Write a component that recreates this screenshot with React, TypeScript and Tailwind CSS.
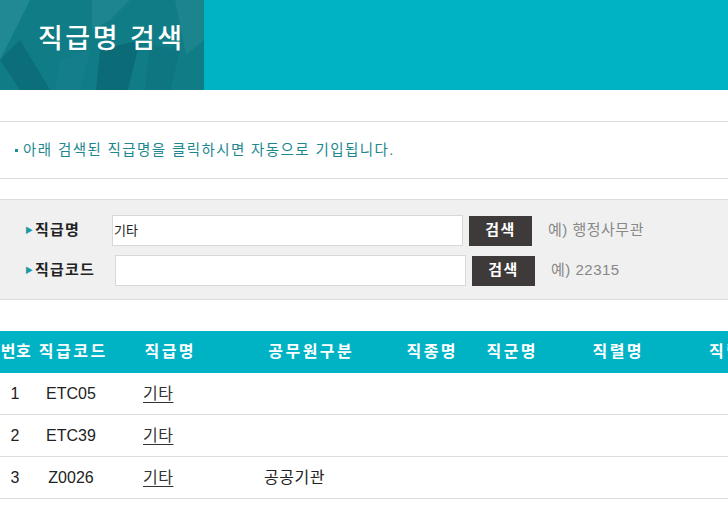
import React from "react";

const KR = '"Liberation Sans", "Noto Sans CJK KR", sans-serif';

function HeaderPattern() {
  return (
    <svg className="absolute inset-0" width="204" height="90" viewBox="0 0 204 90">
      <polygon points="0,0 30,0 10,40 0,60" fill="#2a8f98" opacity="0.7" />
      <polygon points="0,60 20,40 50,90 20,90" fill="#0b6a74" opacity="0.8" />
      <polygon points="92,0 130,0 110,20 92,30" fill="#2b8d96" opacity="0.5" />
      <polygon points="100,50 140,40 128,90 96,90" fill="#0a5f6b" opacity="0.55" />
      <polygon points="175,0 204,0 204,40 186,55" fill="#2a8e97" opacity="0.45" />
      <polygon points="60,60 90,50 80,90 55,90" fill="#1b8590" opacity="0.4" />
      <polygon points="150,45 180,50 170,90 145,90" fill="#0d6e79" opacity="0.4" />
    </svg>
  );
}

const cols = [
  { h: "번호", w: 36 },
  { h: "직급코드", w: 76 },
  { h: "직급명", w: 118 },
  { h: "공무원구분", w: 164 },
  { h: "직종명", w: 78 },
  { h: "직군명", w: 82 },
  { h: "직렬명", w: 130 },
  { h: "직렬", w: 100 },
];

const rows = [
  ["1", "ETC05", "기타", ""],
  ["2", "ETC39", "기타", ""],
  ["3", "Z0026", "기타", "공공기관"],
];

export default function App() {
  return (
    <div className="w-[728px] h-[515px] overflow-hidden bg-white" style={{ fontFamily: KR }}>
      {/* header */}
      <div className="flex h-[90px] bg-[#00b3c4]">
        <div className="relative w-[204px] h-full bg-[#0f7c86] overflow-hidden flex items-center">
          <HeaderPattern />
          <h1 className="relative pl-[38px] text-[27px] leading-none text-white font-medium tracking-[2.5px] pb-[12px] whitespace-nowrap">
            직급명 검색
          </h1>
        </div>
      </div>

      <div className="h-[31px]" />
      {/* notice */}
      <div className="border-t border-b border-[#dddddd] h-[58px] flex items-center pl-[15px]">
        <span className="w-[3px] h-[3px] bg-[#1a8f98] mr-[5px] mt-[1px]" />
        <p className="text-[14.5px] text-[#1d8790] tracking-[1.4px] leading-none">
          아래 검색된 직급명을 클릭하시면 자동으로 기입됩니다.
        </p>
      </div>
      <div className="h-[20px]" />

      {/* search box */}
      <div className="bg-[#f0f0f0] border-t border-b border-[#dcdcdc] h-[101px] pt-[15px] flex flex-col gap-[9px]">
        <div className="flex items-center h-[31px] pl-[25px]">
          <span className="text-[#1a9aa5] text-[8px] mr-[2px]">▶</span>
          <span className="w-[77px] text-[15px] font-bold text-[#222] tracking-[1.2px]">직급명</span>
          <div className="w-[351px] h-[31px] bg-white border border-[#d8d8d8] flex items-center pl-[1px] text-[13px] text-[#222]">
            기타
          </div>
          <button className="ml-[6px] w-[63px] h-[30px] bg-[#3e3a39] text-white text-[15px] font-bold tracking-[1.5px]">
            검색
          </button>
          <span className="ml-[16px] text-[15px] text-[#888] tracking-[0.5px]">예) 행정사무관</span>
        </div>
        <div className="flex items-center h-[31px] pl-[25px]">
          <span className="text-[#1a9aa5] text-[8px] mr-[2px]">▶</span>
          <span className="w-[80px] text-[15px] font-bold text-[#222] tracking-[1.2px]">직급코드</span>
          <div className="w-[351px] h-[31px] bg-white border border-[#d8d8d8]" />
          <button className="ml-[6px] w-[63px] h-[30px] bg-[#3e3a39] text-white text-[15px] font-bold tracking-[1.5px]">
            검색
          </button>
          <span className="ml-[16px] text-[15px] text-[#888] tracking-[0.5px]">예) 22315</span>
        </div>
      </div>

      <div className="h-[31px]" />
      {/* table */}
      <div className="overflow-hidden">
        <div className="ml-[-2px] w-[820px]">
          <div className="flex h-[42px] bg-[#00b3c4] items-center">
            {cols.map((c, i) => (
              <div
                key={c.h}
                className={
                  i === 0
                    ? "text-center text-white text-[16px] font-bold shrink-0 whitespace-nowrap tracking-[0.5px]"
                    : i === cols.length - 1
                    ? "text-left pl-[27px] text-white text-[16px] font-bold shrink-0 whitespace-nowrap tracking-[2.5px]"
                    : "text-center text-white text-[16px] font-bold shrink-0 whitespace-nowrap tracking-[2.5px] pl-[2.5px]"
                }
                style={{ width: c.w }}
              >
                {c.h}
              </div>
            ))}
          </div>
          {rows.map((r) => (
            <div key={r[0]} className="flex h-[42px] items-center border-b border-[#dddddd] text-[16px] text-[#222]">
              <div className="w-[34px] shrink-0 text-center">{r[0]}</div>
              <div className="w-[78px] shrink-0 text-center">{r[1]}</div>
              <div className="w-[118px] shrink-0 pl-[33px]">
                <span className="underline underline-offset-[3px] text-[#333] tracking-[0.5px]">{r[2]}</span>
              </div>
              <div className="w-[164px] shrink-0 pl-[36px] tracking-[0.5px]">{r[3]}</div>
            </div>
          ))}
        </div>
      </div>
    </div>
  );
}
